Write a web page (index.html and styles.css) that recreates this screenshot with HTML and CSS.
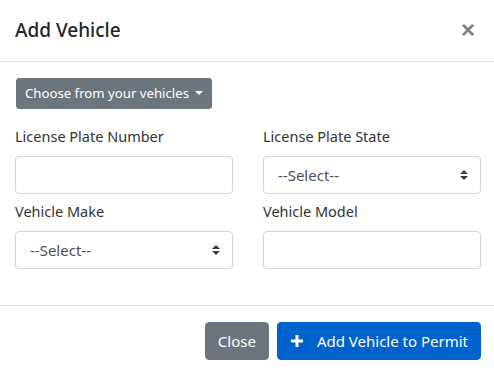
FILE: index.html
```html
<!DOCTYPE html>
<html lang="en">
<head>
    <meta charset="UTF-8">
    <meta name="viewport" content="width=device-width, initial-scale=1.0">
    <title>Add Vehicle</title>
    <link rel="stylesheet" href="styles.css">
</head>
<body>
    <div class="modal">
        <header class="modal-header">
            <h1 class="modal-title">Add Vehicle</h1>
            <button class="close" type="button">&times;</button>
        </header>
        <main class="modal-body">
            <button class="btn btn-sm btn-secondary dropdown" type="button">Choose from your vehicles <span class="caret"></span></button>
            <div class="form-grid">
                <div class="field">
                    <label>License Plate Number</label>
                    <input class="control" type="text">
                </div>
                <div class="field">
                    <label>License Plate State</label>
                    <select class="control select"><option>--Select--</option></select>
                </div>
                <div class="field">
                    <label>Vehicle Make</label>
                    <select class="control select"><option>--Select--</option></select>
                </div>
                <div class="field">
                    <label>Vehicle Model</label>
                    <input class="control" type="text">
                </div>
            </div>
        </main>
        <footer class="modal-footer">
            <button class="btn btn-secondary" type="button">Close</button>
            <button class="btn btn-primary" type="button">
                <svg width="14" height="14" viewBox="0 0 14 14"><path d="M7 1v12M1 7h12" stroke="#fff" stroke-width="3"/></svg>
                Add Vehicle to Permit
            </button>
        </footer>
    </div>
</body>
</html>
```
FILE: styles.css
```css
body {
    margin: 0;
    font-family: "Noto Sans", "Open Sans", sans-serif;
    color: #212529;
    background: #fff;
}
.modal {
    width: 494px;
}
.modal-header {
    display: flex;
    align-items: center;
    justify-content: space-between;
    height: 62px;
    padding: 0 13px 0 15px;
    box-sizing: border-box;
    border-bottom: 1px solid #dee2e6;
}
.modal-title {
    margin: 0;
    font-size: 19px;
    font-weight: 500;
    line-height: 1.5;
}
.close {
    border: 0;
    background: none;
    padding: 0 6px 2px;
    font-family: "Liberation Sans", Arial, sans-serif;
    font-size: 24px;
    font-weight: 700;
    line-height: 1;
    color: #808080;
    cursor: pointer;
}
.modal-body {
    padding: 16px 13px 16px 15px;
}
.btn {
    display: inline-flex;
    align-items: center;
    gap: 13px;
    height: 38px;
    padding: 0 12px;
    border: 1px solid transparent;
    border-radius: 4px;
    font-family: inherit;
    font-size: 15px;
    line-height: 1.5;
    color: #fff;
    cursor: pointer;
}
.btn-sm {
    height: 31px;
    padding: 0 8px;
    font-size: 13.2px;
    gap: 6px;
    border-radius: 3px;
}
.dropdown {
    margin-left: 1px;
}
.btn-secondary {
    background: #6c757d;
    border-color: #6c757d;
}
.btn-primary {
    background: #0062cc;
    border-color: #0062cc;
}
.caret {
    width: 0;
    height: 0;
    border-top: 4px solid #fff;
    border-left: 4px solid transparent;
    border-right: 4px solid transparent;
    margin-top: -2px;
}
.form-grid {
    display: grid;
    grid-template-columns: 1fr 1fr;
    column-gap: 30px;
    row-gap: 6px;
    margin-top: 16px;
    margin-bottom: 20px;
}
.field label {
    display: block;
    font-size: 14.5px;
    line-height: 23px;
    margin-bottom: 8px;
    color: #333;
}
.control {
    display: block;
    width: 100%;
    height: 38px;
    box-sizing: border-box;
    border: 1px solid #ced4da;
    border-radius: 4px;
    padding: 0 12px;
    font-family: inherit;
    font-size: 15px;
    color: #495057;
    background: #fff;
}
.select {
    appearance: none;
    -webkit-appearance: none;
    padding-left: 14px;
    background-image: url("data:image/svg+xml,%3Csvg xmlns='http://www.w3.org/2000/svg' width='8' height='10' viewBox='0 0 8 10'%3E%3Cpath d='M4 0L0 4h8zM4 10L0 6h8z' fill='%23343a40'/%3E%3C/svg%3E");
    background-repeat: no-repeat;
    background-position: right 12px center;
    background-size: 8px 10px;
}
.modal-footer {
    display: flex;
    justify-content: flex-end;
    gap: 8px;
    padding: 16px 13px 16px 15px;
    border-top: 1px solid #dee2e6;
}
```
